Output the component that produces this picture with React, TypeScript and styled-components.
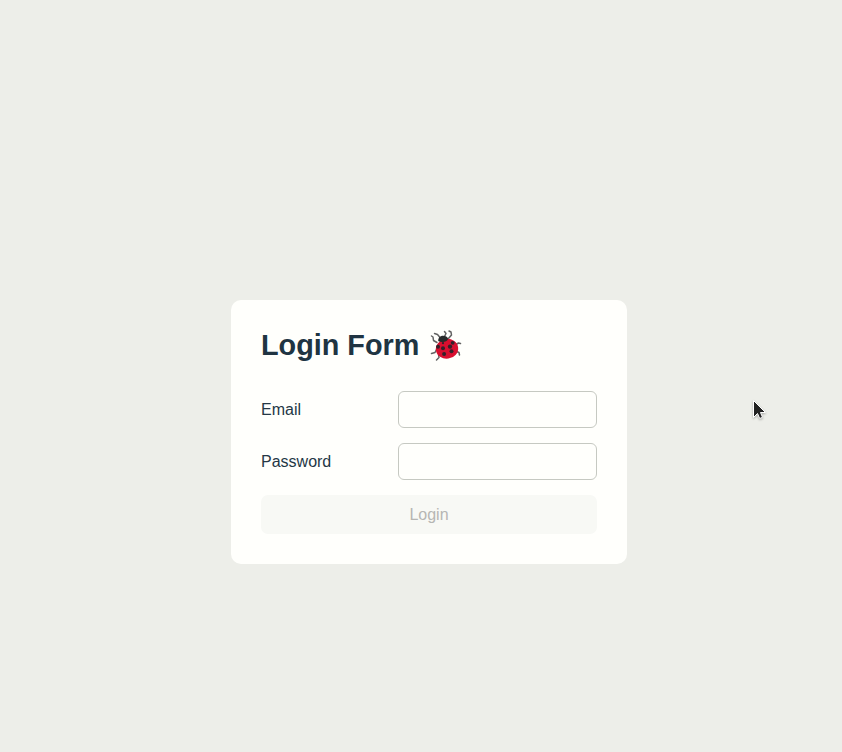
import React from "react";
import styled, { createGlobalStyle } from "styled-components";

const GlobalStyle = createGlobalStyle`
  * { box-sizing: border-box; }
  body { margin: 0; background: #edeee9; color: #243746; font-family: "Liberation Sans", Arial, sans-serif; overflow: hidden; }
`;

const Page = styled.main`
  position: relative;
  height: 752px;
  padding: 300px 0 0 231px;
`;

const Card = styled.form`
  width: 396px;
  height: 264px;
  padding: 30px;
  border-radius: 10px;
  background: #fffffc;
`;

const Title = styled.h1`
  display: flex;
  align-items: center;
  gap: 10px;
  margin: 0 0 30px;
  height: 31px;
  color: #203442;
  font-size: 28.8px;
  line-height: 31px;
`;

const Ladybug = styled.svg`
  width: 34px;
  height: 34px;
`;

const Field = styled.label`
  display: grid;
  grid-template-columns: 137px 199px;
  align-items: center;
  height: 37px;
  margin-bottom: 15px;
  font-size: 16px;
`;

const Input = styled.input`
  height: 37px;
  border: 1px solid #c6c9c2;
  border-radius: 6px;
  background: #fffffc;
  outline: none;
`;

const SubmitButton = styled.button`
  width: 100%;
  height: 39px;
  border: 0;
  border-radius: 7px;
  background: #f8f9f5;
  color: #b6b6b3;
  font: 16px "Liberation Sans", Arial, sans-serif;
`;

const Pointer = styled.svg`
  position: absolute;
  left: 750px;
  top: 398px;
  width: 20px;
  height: 26px;
  filter: drop-shadow(0 1px 1px rgba(0, 0, 0, 0.3));
`;

export default function App() {
  return (
    <Page>
      <GlobalStyle />
      <Card>
        <Title>
          Login Form
          <Ladybug viewBox="0 0 34 34" fill="none" aria-label="Ladybug">
            <g stroke="#626262" strokeWidth="1.5" strokeLinecap="round" strokeLinejoin="round">
              <path d="M11 8.5 8.5 5.5 5.5 4.5M15.5 7.5 17 4.5 15.5 2.5" />
              <path d="M8 13.5 4.5 11.5 4 8 2.5 7M19 10l3.5-4L22 3l-2-1" />
              <path d="M8 19.5 6 23.5 2.5 24.5M9.5 25.5l.5 3L7.5 31" />
              <path d="M27 15.5l2.5-1.5 2 .5M27.5 22.5l2.5 1 .5 2.5" />
            </g>
            <ellipse cx="18" cy="19.8" rx="11.2" ry="9.9" transform="rotate(-8 18 19.8)" fill="#d80f2f" />
            <path d="M9.2 12c-.3-2.5 1.5-4.8 3.8-5.2 2.3-.5 5.8.8 6 2.7.2 1.5-1.4 2.8-3.5 3.2-2.5.5-4.6.6-6.3-.7Z" fill="#272a2b" />
            <g fill="#33212a">
              <circle cx="9" cy="17.8" r="2" />
              <circle cx="14" cy="19.3" r="2" />
              <circle cx="14" cy="14.2" r="1.1" />
              <circle cx="21" cy="17.6" r="2.2" />
              <circle cx="23.7" cy="13.8" r="1.9" />
              <circle cx="22.5" cy="22.2" r="2" />
              <circle cx="15.1" cy="25" r="2" />
            </g>
          </Ladybug>
        </Title>
        <Field>Email<Input type="email" /></Field>
        <Field>Password<Input type="password" /></Field>
        <SubmitButton type="button" disabled>Login</SubmitButton>
      </Card>
      <Pointer viewBox="0 0 20 26">
        <path d="M3.5 2.5v17l4-4 2.2 5 2.8-1.2-2-4.8h5z" fill="#222" stroke="#fff" />
      </Pointer>
    </Page>
  );
}
